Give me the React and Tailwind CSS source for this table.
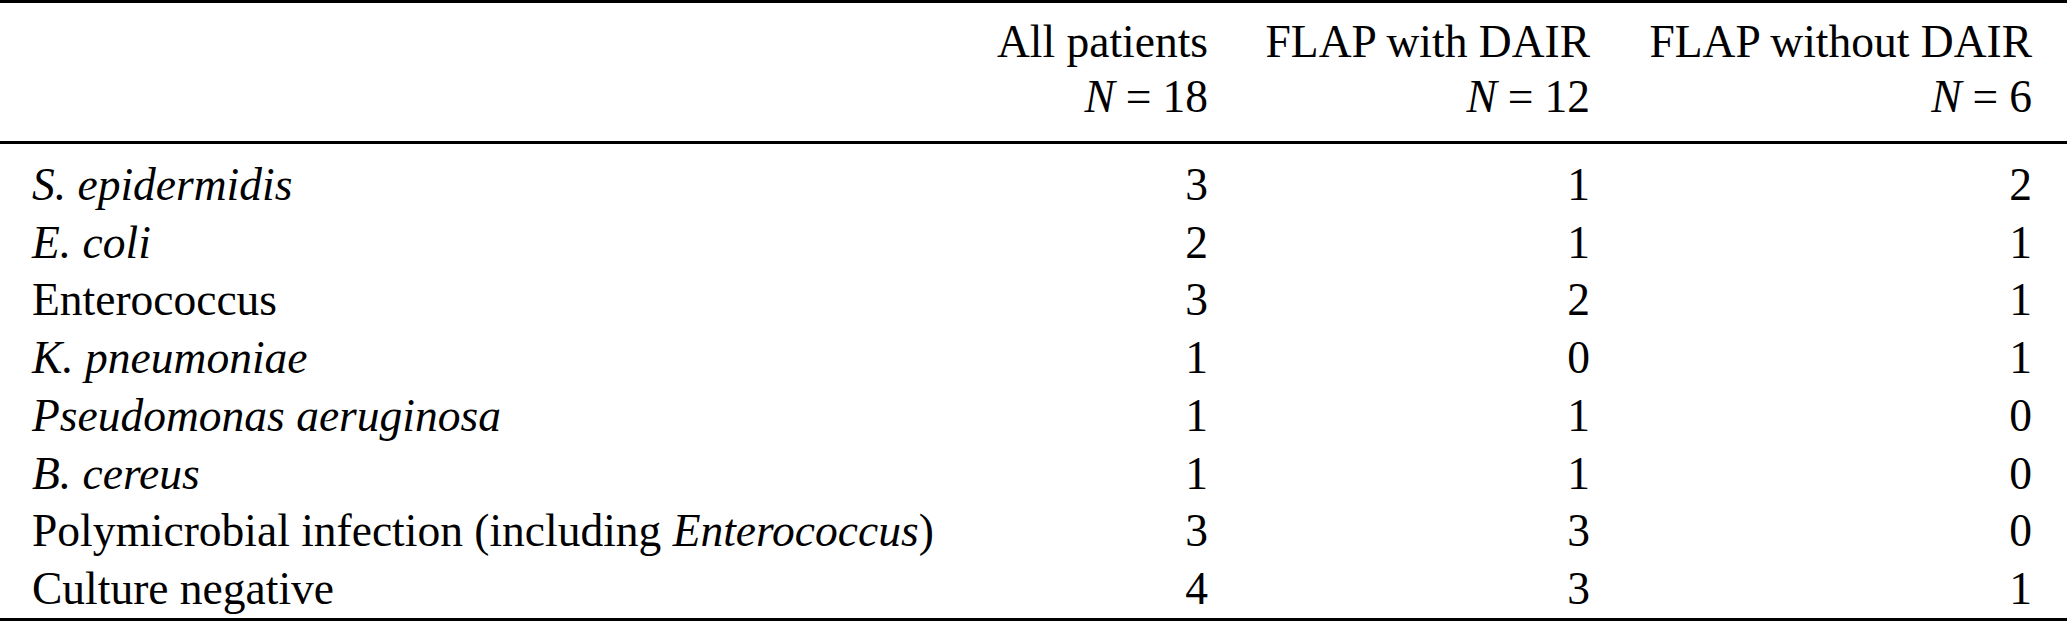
import React from "react";

const rows = [
  { label: <i>S. epidermidis</i>, v: [3, 1, 2] },
  { label: <i>E. coli</i>, v: [2, 1, 1] },
  { label: "Enterococcus", v: [3, 2, 1] },
  { label: <i>K. pneumoniae</i>, v: [1, 0, 1] },
  { label: <i>Pseudomonas aeruginosa</i>, v: [1, 1, 0] },
  { label: <i>B. cereus</i>, v: [1, 1, 0] },
  {
    label: (
      <>
        Polymicrobial infection (including <i>Enterococcus</i>)
      </>
    ),
    v: [3, 3, 0],
  },
  { label: "Culture negative", v: [4, 3, 1] },
];

function NEq({ n }) {
  return (
    <span className="whitespace-nowrap">
      <i>N</i>
      <span className="mx-[11px]">=</span>
      {n}
    </span>
  );
}

export default function App() {
  return (
    <div
      className="w-[2067px] h-[622px] flex flex-col bg-white text-black text-[45.5px] overflow-hidden"
      style={{ fontFamily: '"Liberation Serif", "Times New Roman", serif' }}
    >
      <div className="border-t-[3px] border-black shrink-0" />
      <div className="shrink-0 grid grid-cols-[1fr_240px_382px_442px] pl-[32px] pr-[35px] pt-[11px] pb-[17px] leading-[55px]">
        <div />
        <div className="text-right whitespace-nowrap">
          <div>All patients</div>
          <div>
            <NEq n="18" />
          </div>
        </div>
        <div className="text-right whitespace-nowrap">
          <div>FLAP with DAIR</div>
          <div>
            <NEq n="12" />
          </div>
        </div>
        <div className="text-right whitespace-nowrap">
          <div>FLAP without DAIR</div>
          <div>
            <NEq n="6" />
          </div>
        </div>
      </div>
      <div className="border-t-[3px] border-black shrink-0" />
      <div className="flex-1 min-h-0 grid content-start grid-cols-[1fr_240px_382px_442px] pl-[32px] pr-[35px] pt-[12px] leading-[57.7px]">
        {rows.map((r, i) => (
          <React.Fragment key={i}>
            <div className="whitespace-nowrap">{r.label}</div>
            {r.v.map((x, j) => (
              <div key={j} className="text-right">
                {x}
              </div>
            ))}
          </React.Fragment>
        ))}
      </div>
      <div className="border-t-[3px] border-black shrink-0" />
      <div className="h-[1px] shrink-0" />
    </div>
  );
}
